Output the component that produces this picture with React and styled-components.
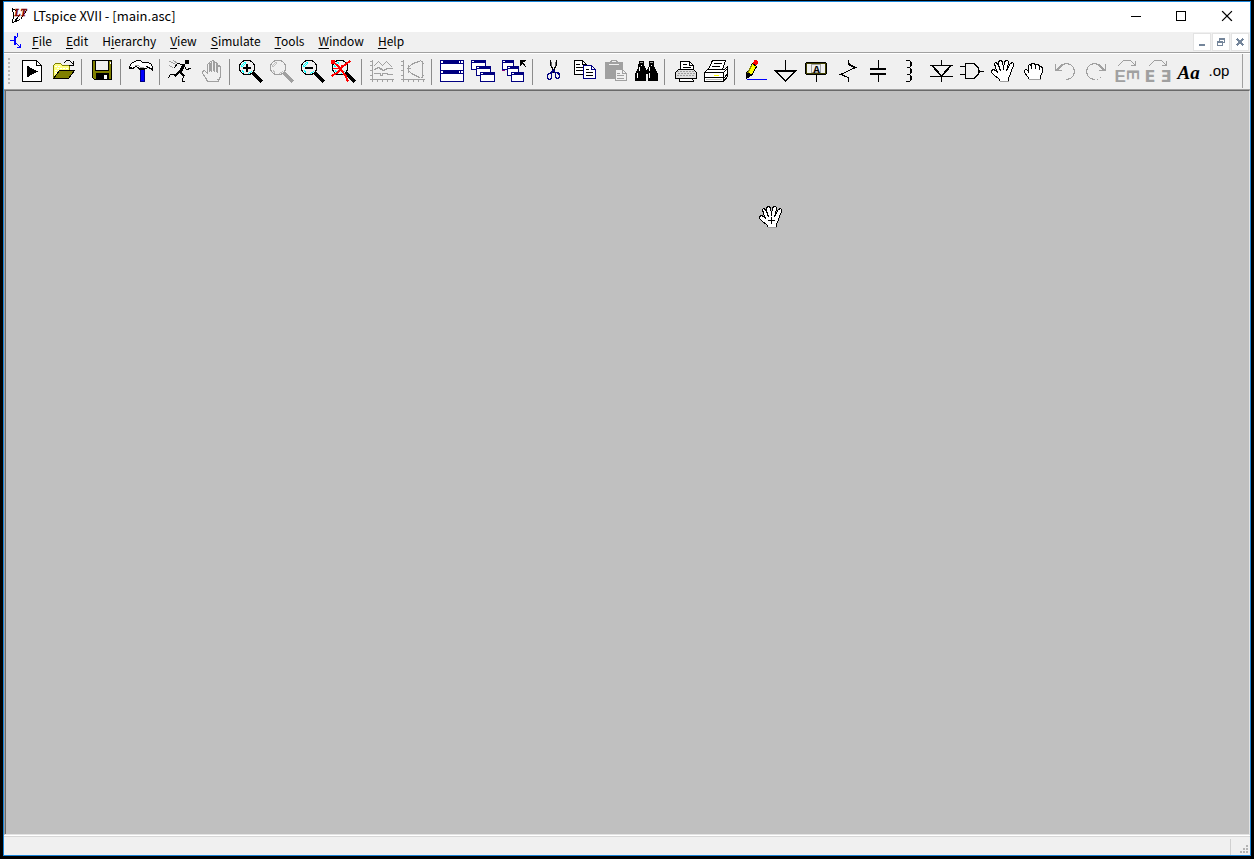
import React from 'react';
import styled, { createGlobalStyle } from 'styled-components';

const GlobalStyle = createGlobalStyle`
  * {
    box-sizing: border-box;
  }
  html, body, #root {
    height: 100%;
    margin: 0;
  }
  body {
    background: #000;
    font-family: "Noto Sans CJK SC", "Noto Sans", sans-serif;
    font-size: 12px;
    color: #000;
  }
  button {
    font: inherit;
    color: inherit;
    margin: 0;
    padding: 0;
    border: 0;
    background: transparent;
  }
`;

const Desktop = styled.div`
  height: 100%;
  padding: 1px 3px 3px;
`;

const Frame = styled.div`
  height: 100%;
  display: flex;
  flex-direction: column;
  border: 1px solid #1883d7;
  background: #f0f0f0;
`;

const TitleBar = styled.header`
  display: flex;
  align-items: center;
  height: 30px;
  padding: 0 0 2px 7px;
  background: #fff;
`;

const Title = styled.h1`
  flex: 1;
  margin: 0 0 0 4px;
  font-size: 13px;
  line-height: 20px;
  font-weight: 400;
`;

const CaptionButton = styled.button`
  display: flex;
  align-items: center;
  justify-content: center;
  width: 46px;
  height: 28px;
`;

const MenuBar = styled.nav`
  display: flex;
  height: 20px;
  padding-left: 4px;
`;

const MenuList = styled.div`
  flex: 1;
  display: flex;
  align-items: flex-start;
  margin-left: -1px;
`;

const MenuItem = styled.button`
  padding: 0 7px;
  line-height: 18px;
  white-space: nowrap;
`;

const Mnemonic = styled.span`
  text-decoration: underline;
  text-underline-offset: 2px;
`;

const MdiButton = styled.button`
  display: flex;
  align-items: center;
  justify-content: center;
  width: 18px;
  height: 18px;
  margin: 1px 1px 0 0;
  border: 1px solid #e3e3e3;
  background: #fff;
`;

const ToolBar = styled.div`
  display: flex;
  align-items: center;
  height: 38px;
  padding: 1px 7px 1px 4px;
  border-top: 1px solid #a0a0a0;
  box-shadow: inset 0 1px #fff;
  border-bottom: 1px solid #a0a0a0;
`;

const Gripper = styled.div`
  width: 3px;
  height: 27px;
  margin-right: 5px;
  background: repeating-linear-gradient(#b8b8b8 0 2px, #f0f0f0 2px 4px);
  border-right: 1px solid #f0f0f0;
`;

const Tools = styled.div`
  flex: 1;
  display: flex;
  align-items: center;
  height: 34px;
  padding-top: 2px;
  border-right: 1px solid #a0a0a0;
`;

const ToolButton = styled.button`
  display: flex;
  justify-content: center;
  width: 31px;
  height: 24px;
  padding-left: 1px;
`;

const Separator = styled.div`
  width: 8px;
  height: 26px;
  background: linear-gradient(#8c8c8c, #8c8c8c) 3px 0 / 1px 100% no-repeat;
`;

const Workspace = styled.main`
  position: relative;
  flex: 1;
  border: 1px solid;
  border-color: #696969 #e3e3e3 #e3e3e3 #a0a0a0;
  box-shadow: inset 1px 0 #696969;
  background: #c0c0c0;
`;

const Pointer = styled.div`
  position: absolute;
  left: 754px;
  top: 115px;
  height: 24px;
`;

const StatusBar = styled.footer`
  display: flex;
  justify-content: flex-end;
  height: 20px;
  border-top: 1px solid #fff;
  box-shadow: inset 0 1px #d7d7d7;
`;

const StatusPane = styled.div`
  width: 20px;
  margin-top: 3px;
  border-left: 1px solid #d0d0d0;
  display: flex;
  align-items: flex-end;
  justify-content: flex-end;
  padding: 0 2px 2px 0;
`;

const PixelSvg = styled.svg`
  display: block;
  flex: none;
  overflow: visible;
  fill: none;
  stroke: ${(p) => p.$ink || '#000'};
  stroke-width: 1;
  stroke-linecap: square;
  shape-rendering: crispEdges;
`;

const GREY = '#a0a0a0';
const NAVY = '#000080';

// integer coordinates are pixel centres
function Pixels({ size = 24, ink, children }) {
  return (
    <PixelSvg width={size} height={size} viewBox={`-0.5 -0.5 ${size} ${size}`} $ink={ink} aria-hidden="true">
      {children}
    </PixelSvg>
  );
}

function Lens({ color = '#000', glint = '#00ffff', children }) {
  return (
    <Pixels ink={color}>
      <path d="M6 0H11L13 1L15 3L16 5V9L15 11L13 13L11 14H6L4 13L2 11L1 9V5L2 3L4 1Z" fill="#f0f0f0" strokeWidth="1.400" />
      <path d="M3 6V5L6 2H7M4 6L7 3M13 11L10 13M4 10L5 12" stroke={glint} />
      <path d="M15 13L22 20" strokeWidth="3" />
      {children}
    </Pixels>
  );
}

function MiniWindow({ x, y, w = 15, h = 10, wide }) {
  return (
    <g stroke="none">
      <rect x={x - 0.5} y={y - 0.5} width={w} height={h} fill={NAVY} />
      <rect x={x + 0.5} y={y + (wide ? 3.5 : 2.5)} width={w - 2} height={h - (wide ? 5 : 4)} fill="#fff" />
      {wide ? (
        <path d={`M${x + 0.5} ${y + 0.5}h2v2h-2zM${x + w - 5.5} ${y + 0.5}h1v2h-1zM${x + w - 3.5} ${y + 0.5}h2v2h-2z`} fill="#fff" />
      ) : (
        <path d={`M${x + 0.5} ${y + 0.5}h2v1h-2z`} fill="#fff" />
      )}
    </g>
  );
}

function OpenHand({ children }) {
  return (
    <Pixels>
      <path
        d="M9 21L7 18L3 15L0 12V10L2 9L4 10L6 12L4 7L3 3L4 2L6 3L8 8L7 2L8 0H10L11 2L12 7L13 2L14 0H16L17 1L16 8L19 3L21 2L22 3V5L20 10L19 14L17 17V21"
        fill="#fff"
      />
      <path d="M8 8L9 10M12 7V9M16 8L15 10" />
      <path d="M9 21H17" stroke={GREY} />
      {children}
    </Pixels>
  );
}

const icons = {
  new: (
    <Pixels>
      <path d="M2 0H16L21 5V21H2Z" fill="#fff" />
      <path d="M16 0V5H21" />
      <path d="M7 6L16 11L7 16Z" fill="#000" />
    </Pixels>
  ),
  open: (
    <Pixels>
      <path d="M2 18V5L4 3H9L11 5H18V10" fill="#ffff80" stroke="#808000" />
      <path d="M4 6H9M6 8H16M4 10H12M4 12H9" stroke="#fff" strokeDasharray="1 2" />
      <path d="M2 18L8 10H23L17 18Z" fill="#808000" />
      <path d="M13 2L15 0H18L21 3M22 1V5H18" />
    </Pixels>
  ),
  save: (
    <Pixels>
      <path d="M2 0H21V19H4L2 17Z" fill="#808000" />
      <path d="M5 0H18V10H5Z" fill="#f0f0f0" />
      <path d="M6 13H18V19H6Z" fill="#000" />
      <path d="M14 15H16V18H14Z" fill="#fff" stroke="#fff" />
      <path d="M20 2V3" stroke="#fff" />
    </Pixels>
  ),
  hammer: (
    <Pixels>
      <path d="M11 9H15V21H11Z" fill="#0000ff" stroke={NAVY} />
      <path d="M12 11V20M13 11V20" stroke="#0000ff" />
      <path d="M0 8V6L2 3L5 1L8 0H11L13 2H18L21 3L23 6V10L21 8L18 7L15 9H10L9 7L6 6L4 8Z" fill="#fff" />
      <path d="M1 7L3 8L5 7M9 8H15M17 6L22 8" />
      <path d="M6 5H9L11 7H14" stroke={GREY} />
    </Pixels>
  ),
  run: (
    <Pixels>
      <path d="M1 1H2L7 4M5 0L9 3M1 5L4 7" stroke={GREY} />
      <path d="M17 0H20V3H17Z" fill="#000" />
      <path d="M15 5L12 11" strokeWidth="3" />
      <path d="M14 4L9 3L6 7M16 6L18 9L22 8M10 11L7 14H2L0 17M12 12L16 15L14 18V21H16" />
      <path d="M10 12L7 15M12 12L15 15" strokeWidth="2" />
    </Pixels>
  ),
  halt: (
    <Pixels ink={GREY}>
      <path d="M8 21L6 17L3 13V11L5 10L8 13V4L9 3L10 4V11V2L11 1L12 2V11V1L13 0L15 1V11V3L16 2L18 3V12V6L20 5L21 7V16L19 20V21Z" />
      <path d="M11 3V10M14 2V10M17 4V11M8 21H19M18 19H20" />
    </Pixels>
  ),
  zoomIn: (
    <Lens>
      <path d="M5 7H12M5 8H12M8 4V11M9 4V11" />
    </Lens>
  ),
  pan: <Lens color={GREY} glint="#c0c0c0" />,
  zoomOut: (
    <Lens>
      <path d="M5 7H12M5 8H12" />
    </Lens>
  ),
  zoomFit: (
    <Lens>
      <path d="M1 1L7 6L14 15L16 20M18 1L11 6L6 12L1 15" stroke="#ff0000" strokeWidth="2" />
      <path d="M0 0H3V3H0ZM2 8H10M10 5V10" stroke="#ff0000" />
    </Lens>
  ),
  waves: (
    <Pixels ink={GREY}>
      <path d="M2 0V21M0 19H23M0 1H2M0 5H2M0 10H2M0 15H2M7 19V21M12 19V21M17 19V21M22 19V21" />
      <path d="M4 5L8 1L12 5L16 1L21 6M4 9L8 7L13 10L17 8H22M4 13H10V15H12V13H17V14H22" strokeWidth="1.400" />
    </Pixels>
  ),
  smith: (
    <Pixels ink={GREY}>
      <path d="M2 0V21M0 19H23M0 1H2M0 5H2M0 10H2M0 15H2M7 19V21M12 19V21M17 19V21M22 19V21" />
      <path d="M18 1L14 2L10 4L7 7V10L10 13L14 15L18 17M19 0L22 3M22 15L20 17" strokeWidth="1.400" />
      <path d="M21 1V17" strokeDasharray="2 1" />
      <path d="M7 5V12M6 8H9" />
    </Pixels>
  ),
  tile: (
    <Pixels>
      <MiniWindow x={0} y={0} w={24} h={11} wide />
      <MiniWindow x={0} y={10} w={24} h={12} wide />
    </Pixels>
  ),
  cascade: (
    <Pixels>
      <MiniWindow x={0} y={0} />
      <MiniWindow x={5} y={6} />
      <MiniWindow x={9} y={12} />
    </Pixels>
  ),
  closeAll: (
    <Pixels>
      <MiniWindow x={0} y={0} w={12} />
      <MiniWindow x={5} y={6} w={12} />
      <MiniWindow x={9} y={12} w={13} />
      <path d="M18 0V5M19 0V4M18 0H23M18 1H22M19 1L23 6M19 2L22 5" />
      <path d="M0 10H2" stroke="#800080" />
    </Pixels>
  ),
  cut: (
    <Pixels>
      <path d="M9 0V4L12 10V12M15 0V4L12 10" />
      <path d="M10 2V5M14 2V5" stroke="#606060" />
      <path d="M12 10L9 13H7L6 15V18L8 19L10 18V14M12 10L14 13V17L16 18L18 17V14L16 12H14" stroke={NAVY} strokeWidth="1.600" />
    </Pixels>
  ),
  copy: (
    <Pixels>
      <path d="M2 0H10L14 4V14H2Z" fill="#fff" />
      <path d="M10 0V4H14M4 4H7M4 7H10M4 10H10" />
      <g stroke={NAVY}>
        <path d="M11 5H19L23 9V18H11Z" fill="#fff" />
        <path d="M19 5V9H23" />
      </g>
      <path d="M14 9H16M14 12H20M14 15H20" />
    </Pixels>
  ),
  paste: (
    <Pixels ink={GREY}>
      <path d="M2 2H19V18H2Z" fill={GREY} />
      <path d="M7 1L9 0H12L14 1" />
      <path d="M6 4H15" stroke="#f0f0f0" />
      <path d="M12 9H19L23 13V20H12Z" fill="#f0f0f0" />
      <path d="M19 9V13H23M14 13H16M14 15H20M14 18H20" />
    </Pixels>
  ),
  find: (
    <Pixels>
      <path d="M5 1H9V5L11 8V20H1V14L4 7ZM15 1H19V5L23 14V20H14V8L15 5Z" fill="#000" />
      <path d="M11 9H14V13H11Z" fill="#000" />
      <path d="M6 2H8M16 2H18" stroke={GREY} />
      <path d="M5 7V10M3 13V17M15 7V10M15 13V17M12 8V9M7 5H7M17 5H17" stroke="#fff" />
    </Pixels>
  ),
  print: (
    <Pixels>
      <path d="M7 9V1H16L20 5V9" fill="#fff" />
      <path d="M16 1V5H20M10 4H13M10 7H17" />
      <path d="M5 9H20L23 12V18H2V12Z" fill="#e0e0e0" />
      <path d="M4 11H20M5 13H21M4 15H21" stroke={GREY} strokeDasharray="1 2" />
      <path d="M6 18H19L20 21H6Z" fill="#fff" />
    </Pixels>
  ),
  setup: (
    <Pixels>
      <path d="M4 9L8 0H21L18 9" fill="#fff" />
      <path d="M10 3H17M8 6H15" />
      <path d="M3 9H20L23 6V16L19 21H0V12Z" fill="#fff" />
      <path d="M0 12H19V21M19 12L23 8M1 17H18M20 17L23 13" />
      <path d="M10 15H14" stroke="#ffff00" />
      <path d="M2 19H17" stroke="#c0c0c0" />
    </Pixels>
  ),
  wire: (
    <Pixels>
      <path d="M9 3L13 6L8 15L4 12Z" fill="#ffff00" />
      <path d="M8 5L4 13" stroke="#808000" />
      <path d="M11 0H13L14 2L13 4L10 3Z" fill="#ff0000" stroke="#ff0000" />
      <path d="M3 12L7 15L3 18Z" fill="#000" />
      <path d="M4 19H23" stroke="#0000ff" />
    </Pixels>
  ),
  ground: (
    <Pixels>
      <path d="M11 0V10M0 10H22L11 21ZM2 11H20M2 11L11 20L20 11" />
    </Pixels>
  ),
  label: (
    <Pixels>
      <path d="M1 2H20L21 3V13L20 14H1L0 13V3Z" fill="#f0f0f0" />
      <path d="M1 3H20V13H1Z" stroke="#404000" />
      <path d="M11 15V21" />
      <path d="M6 4H15V12H6Z" stroke={GREY} />
      <text x="11" y="12" textAnchor="middle" fill="#000" stroke="none" fontFamily="Liberation Mono, monospace" fontWeight="700" fontSize="11">A</text>
    </Pixels>
  ),
  resistor: (
    <Pixels>
      <path d="M12 0V3L19 7L4 14L12 17V21M12 4L18 7M5 14L12 17" />
    </Pixels>
  ),
  capacitor: (
    <Pixels>
      <path d="M11 0V8M11 14V21M3 8H18M3 9H18M3 13H18M3 14H18" />
    </Pixels>
  ),
  inductor: (
    <Pixels>
      <path d="M8 0H11L13 2V5L11 7H9M11 7L13 9V12L11 14H9M11 14L13 16V19L11 21H8M12 1V6M12 8V13M12 15V20" />
    </Pixels>
  ),
  diode: (
    <Pixels>
      <path d="M12 0V5M12 16V21M1 5H23M2 5L12 16L22 5M3 5L12 15L21 5M1 16H23" />
    </Pixels>
  ),
  gate: (
    <Pixels>
      <path d="M5 3H13L16 5L18 8V13L16 16L13 18H5ZM0 6H5M0 14H5M18 11H23" strokeWidth="1.400" />
      <path d="M19 10V12" />
    </Pixels>
  ),
  move: <OpenHand />,
  drag: (
    <Pixels>
      <path d="M7 19L5 16L2 12V10L3 9L6 10V5L7 4L9 5V3H12L13 5L14 4H16L17 6L19 6L20 8V12L18 15V19" fill="#fff" />
      <path d="M6 10V12M9 5V8M13 5V8M17 6V9" />
      <path d="M7 19H18" stroke={GREY} />
    </Pixels>
  ),
  undo: (
    <Pixels ink={GREY}>
      <path d="M2 4V10H8M3 9L9 4L13 3L17 4L20 7L21 11L20 15L17 18L13 19M3 10L9 5" strokeWidth="1.400" />
    </Pixels>
  ),
  redo: (
    <Pixels ink={GREY}>
      <path d="M21 4V10H15M20 9L14 4L10 3L6 4L3 7L2 11L3 15L6 18L10 19M20 10L14 5M13 19H13M16 17H16" strokeWidth="1.400" />
    </Pixels>
  ),
  rotate: (
    <Pixels ink={GREY}>
      <path d="M3 5L8 0H15L20 5M20 1V5H16" />
      <g fill={GREY} stroke="none" fontFamily="Liberation Sans, sans-serif" fontWeight="700">
        <text x="-1" y="21" fontSize="17">E</text>
        <text x="9" y="-11" transform="rotate(90)" fontSize="16">E</text>
      </g>
    </Pixels>
  ),
  mirror: (
    <Pixels ink={GREY}>
      <path d="M3 5L8 0H15L20 5M20 1V5H16" />
      <g fill={GREY} stroke="none" fontFamily="DejaVu Sans, sans-serif" fontWeight="700" fontSize="16">
        <text x="-2" y="21">E</text>
        <text x="14" y="21">Ǝ</text>
      </g>
    </Pixels>
  ),
  text: (
    <Pixels>
      <text x="0" y="18" fill="#000" stroke="none" fontFamily="Liberation Serif, serif" fontStyle="italic" fontWeight="700" fontSize="19">Aa</text>
    </Pixels>
  ),
  directive: (
    <Pixels>
      <text x="0" y="15" fill="#000" stroke="none" fontFamily="Liberation Sans, sans-serif" fontSize="15">.op</text>
    </Pixels>
  ),
};

const toolGroups = [
  [['new', 'New Schematic'], ['open', 'Open']],
  [['save', 'Save']],
  [['hammer', 'Control Panel']],
  [['run', 'Run'], ['halt', 'Halt']],
  [['zoomIn', 'Zoom to rectangle'], ['pan', 'Pan'], ['zoomOut', 'Zoom back'], ['zoomFit', 'Zoom full extents']],
  [['waves', 'Autorange'], ['smith', 'Smith chart']],
  [['tile', 'Tile windows'], ['cascade', 'Cascade windows'], ['closeAll', 'Close windows']],
  [['cut', 'Cut'], ['copy', 'Copy'], ['paste', 'Paste'], ['find', 'Find']],
  [['print', 'Print'], ['setup', 'Print Setup']],
  [
    ['wire', 'Wire'], ['ground', 'Ground'], ['label', 'Label Net'], ['resistor', 'Resistor'],
    ['capacitor', 'Capacitor'], ['inductor', 'Inductor'], ['diode', 'Diode'], ['gate', 'Component'],
    ['move', 'Move'], ['drag', 'Drag'], ['undo', 'Undo'], ['redo', 'Redo'],
    ['rotate', 'Rotate'], ['mirror', 'Mirror'], ['text', 'Text'], ['directive', 'SPICE Directive'],
  ],
];

// [before, mnemonic, after]
const menus = [
  ['', 'F', 'ile'],
  ['', 'E', 'dit'],
  ['H', 'i', 'erarchy'],
  ['', 'V', 'iew'],
  ['', 'S', 'imulate'],
  ['', 'T', 'ools'],
  ['', 'W', 'indow'],
  ['', 'H', 'elp'],
];

function App() {
  return (
    <>
      <GlobalStyle />
      <Desktop>
        <Frame>
          <TitleBar>
            <Pixels size={18}>
              <path d="M1 1L4 3M1 1L2 8L1 15L9 12L15 3M2 15L8 8" />
              <text x="3" y="8" fill="#800000" stroke="#800000" strokeWidth="0.500" fontFamily="Liberation Serif, serif" fontStyle="italic" fontWeight="700" fontSize="10">LT</text>
            </Pixels>
            <Title>LTspice XVII - [main.asc]</Title>
            <CaptionButton aria-label="Minimize">
              <Pixels size={12}><path d="M2 6H11" /></Pixels>
            </CaptionButton>
            <CaptionButton aria-label="Maximize">
              <Pixels size={12}><path d="M1 1H10V10H1Z" /></Pixels>
            </CaptionButton>
            <CaptionButton aria-label="Close">
              <Pixels size={12}><path d="M1 1L10 10M10 1L1 10" strokeWidth="1.200" shapeRendering="auto" /></Pixels>
            </CaptionButton>
          </TitleBar>

          <MenuBar>
            <Pixels size={18} ink="#0000ff">
              <path d="M2 8H6M6 4V12M7 4V12M7 6L9 4V1M7 10L12 15M12 12V15H9" />
            </Pixels>
            <MenuList>
              {menus.map(([before, key, after]) => (
                <MenuItem key={before + key + after}>
                  {before}<Mnemonic>{key}</Mnemonic>{after}
                </MenuItem>
              ))}
            </MenuList>
            <MdiButton aria-label="Minimize document">
              <Pixels size={10} ink="#74859a"><path d="M2 7H7M2 8H7" /></Pixels>
            </MdiButton>
            <MdiButton aria-label="Restore document">
              <Pixels size={10} ink="#74859a">
                <path d="M3 3V1H8V5H7M3 2H8M1 4H6V8H1ZM1 5H6" />
              </Pixels>
            </MdiButton>
            <MdiButton aria-label="Close document">
              <Pixels size={10} ink="#74859a"><path d="M2 2L7 7M7 2L2 7" strokeWidth="2" /></Pixels>
            </MdiButton>
          </MenuBar>

          <ToolBar>
            <Gripper />
            <Tools>
              {toolGroups.map((group, i) => (
                <React.Fragment key={i}>
                  {i > 0 && <Separator />}
                  {group.map(([icon, label]) => (
                    <ToolButton key={icon} aria-label={label}>{icons[icon]}</ToolButton>
                  ))}
                </React.Fragment>
              ))}
            </Tools>
          </ToolBar>

          <Workspace>
            <Pointer>
              <OpenHand>
                <path d="M12 11V17M9 14H15" />
              </OpenHand>
            </Pointer>
          </Workspace>

          <StatusBar>
            <StatusPane>
              <Pixels size={8} ink="#b4b4b4">
                <path d="M6 0H7V1H6ZM3 3H4V4H3ZM6 3H7V4H6ZM0 6H1V7H0ZM3 6H4V7H3ZM6 6H7V7H6Z" />
              </Pixels>
            </StatusPane>
          </StatusBar>
        </Frame>
      </Desktop>
    </>
  );
}

export default App;
